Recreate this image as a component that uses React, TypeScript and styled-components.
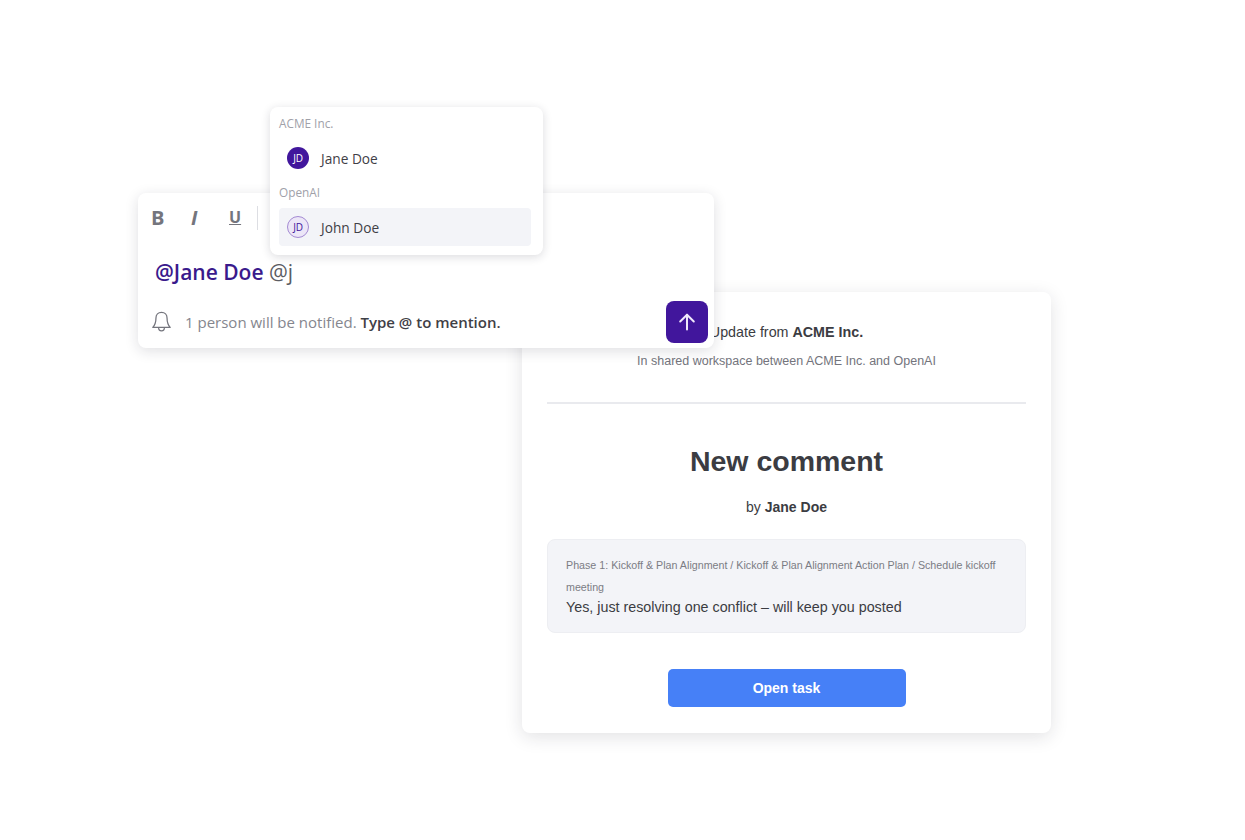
import React from "react";
import styled, { createGlobalStyle } from "styled-components";

const GlobalStyle = createGlobalStyle`
  html, body {
    margin: 0;
    padding: 0;
    background: #fff;
  }
`;

const Canvas = styled.div`
  position: relative;
  width: 1245px;
  height: 840px;
  overflow: hidden;
  background: #fff;
`;

/* email card */
const EmailCard = styled.div`
  position: absolute;
  left: 522px;
  top: 292px;
  width: 529px;
  height: 441px;
  box-sizing: border-box;
  padding: 31px 25px 0 25px;
  border-radius: 8px;
  background: #fff;
  box-shadow: 0 4px 18px rgba(30, 30, 50, 0.13);
  font-family: "Liberation Sans", Arial, sans-serif;
  text-align: center;
  display: flex;
  flex-direction: column;
  align-items: center;
`;

const UpdateLine = styled.div`
  font-size: 14.3px;
  line-height: 18px;
  color: #3b3c42;
  b {
    font-weight: 700;
  }
`;

const Workspace = styled.div`
  margin-top: 12px;
  font-size: 12.5px;
  line-height: 16px;
  color: #73747c;
`;

const Divider = styled.div`
  width: 100%;
  height: 2px;
  margin-top: 33px;
  background: #e9eaee;
`;

const Heading = styled.h1`
  margin: 39px 0 0;
  font-size: 28.5px;
  line-height: 36px;
  font-weight: 700;
  color: #3b3c42;
`;

const ByLine = styled.div`
  margin-top: 19px;
  font-size: 14px;
  line-height: 18px;
  color: #3b3c42;
`;

const Quote = styled.div`
  width: 100%;
  height: 94px;
  box-sizing: border-box;
  margin-top: 23px;
  padding: 15px 18px;
  border: 1px solid #edeef2;
  border-radius: 8px;
  background: #f3f4f8;
  text-align: left;
`;

const QuotePath = styled.div`
  font-size: 10.7px;
  line-height: 21.5px;
  color: #7b7c84;
`;

const QuoteBody = styled.div`
  font-size: 14.3px;
  line-height: 18px;
  color: #3b3c42;
`;

const OpenTask = styled.button`
  width: 238px;
  height: 38px;
  margin-top: 36px;
  border: none;
  border-radius: 5px;
  background: #4680f7;
  color: #fff;
  font-family: inherit;
  font-size: 14px;
  font-weight: 700;
`;

/* editor card */
const EditorCard = styled.div`
  position: absolute;
  left: 138px;
  top: 193px;
  width: 576px;
  height: 155px;
  box-sizing: border-box;
  padding: 12px 13px 0;
  border-radius: 8px;
  background: #fff;
  box-shadow: 0 3px 14px rgba(30, 30, 50, 0.14);
  font-family: "Open Sans", sans-serif;
  display: flex;
  flex-direction: column;
`;

const Toolbar = styled.div`
  display: flex;
  align-items: center;
  height: 25px;
`;

const FormatButton = styled.span<{ $width: number; $size: number; $italic?: boolean; $underline?: boolean }>`
  width: ${(p) => p.$width}px;
  font-size: ${(p) => p.$size}px;
  line-height: 25px;
  font-weight: 700;
  color: #74757d;
  font-style: ${(p) => (p.$italic ? "italic" : "normal")};
  text-decoration: ${(p) => (p.$underline ? "underline" : "none")};
`;

const Separator = styled.div`
  width: 1px;
  height: 24px;
  background: #dddee3;
`;

const Message = styled.div`
  margin: 29px 0 0 4px;
  font-size: 21px;
  line-height: 27px;
  color: #5b5c63;
`;

const Mention = styled.span`
  font-weight: 600;
  color: #3a1a8c;
`;

const Footer = styled.div`
  display: flex;
  align-items: center;
  gap: 13px;
  margin-top: 24px;
  font-size: 15px;
  line-height: 22px;
  color: #85868e;
  b {
    font-weight: 600;
    color: #3f4046;
  }
`;

const SendButton = styled.div`
  position: absolute;
  left: 528px;
  top: 108px;
  width: 42px;
  height: 42px;
  border-radius: 8px;
  background: #41169c;
  display: flex;
  align-items: center;
  justify-content: center;
`;

/* mention dropdown */
const Dropdown = styled.div`
  position: absolute;
  left: 270px;
  top: 107px;
  width: 273px;
  height: 148px;
  box-sizing: border-box;
  padding: 9px 12px 0 9px;
  border-radius: 8px;
  background: #fff;
  box-shadow: 0 2px 10px rgba(30, 30, 50, 0.16);
  font-family: "Open Sans", sans-serif;
`;

const GroupLabel = styled.div`
  height: 15px;
  font-size: 11.8px;
  line-height: 15px;
  color: #a0a1a9;
`;

const Person = styled.div<{ $active?: boolean }>`
  display: flex;
  align-items: center;
  gap: 12px;
  height: 38px;
  margin: ${(p) => (p.$active ? "8px 0 0" : "8px 0 8px")};
  padding-left: 8px;
  border-radius: 4px;
  background: ${(p) => (p.$active ? "#f3f4f8" : "transparent")};
  font-size: 13.7px;
  color: #3f4046;
`;

const Avatar = styled.div<{ $light?: boolean }>`
  width: 22px;
  height: 22px;
  box-sizing: border-box;
  border-radius: 50%;
  display: flex;
  align-items: center;
  justify-content: center;
  font-size: 10px;
  letter-spacing: -0.3px;
  background: ${(p) => (p.$light ? "#ece6f7" : "#41169c")};
  color: ${(p) => (p.$light ? "#41169c" : "#fff")};
  border: ${(p) => (p.$light ? "1px solid #a48ad3" : "none")};
`;

const BellIcon = () => (
  <svg width="21" height="23" viewBox="0 0 20 22" fill="none" stroke="#74757d" strokeWidth="1.2" strokeLinejoin="round">
    <path d="M10 2.200c-3.200 0-5.300 2.400-5.300 5.400 0 5-1 6.800-3 9.100h16.600c-2-2.300-3-4.100-3-9.100 0-3-2.100-5.400-5.300-5.400z" />
    <path d="M7.200 16.800c0 1.900 1.200 3.200 2.800 3.200s2.800-1.300 2.800-3.200" />
  </svg>
);

const ArrowUpIcon = () => (
  <svg width="18" height="18" viewBox="0 0 18 18" fill="none" stroke="#f0e9fb" strokeWidth="2" strokeLinecap="round" strokeLinejoin="round">
    <path d="M9 16.500V1.800" />
    <path d="M2.200 8.500L9 1.800l6.800 6.700" />
  </svg>
);

const App: React.FC = () => {
  return (
    <Canvas>
      <GlobalStyle />
      <EmailCard>
        <UpdateLine>
          Update from <b>ACME Inc.</b>
        </UpdateLine>
        <Workspace>In shared workspace between ACME Inc. and OpenAI</Workspace>
        <Divider />
        <Heading>New comment</Heading>
        <ByLine>
          by <b>Jane Doe</b>
        </ByLine>
        <Quote>
          <QuotePath>
            Phase 1: Kickoff &amp; Plan Alignment / Kickoff &amp; Plan Alignment Action Plan / Schedule kickoff meeting
          </QuotePath>
          <QuoteBody>Yes, just resolving one conflict – will keep you posted</QuoteBody>
        </Quote>
        <OpenTask>Open task</OpenTask>
      </EmailCard>

      <EditorCard>
        <Toolbar>
          <FormatButton $width={40} $size={20}>B</FormatButton>
          <FormatButton $width={38} $size={20} $italic>I</FormatButton>
          <FormatButton $width={28} $size={16} $underline>U</FormatButton>
          <Separator />
        </Toolbar>
        <Message>
          <Mention>@Jane Doe</Mention> @j
        </Message>
        <Footer>
          <BellIcon />
          <span>
            1 person will be notified. <b>Type @ to mention.</b>
          </span>
        </Footer>
        <SendButton>
          <ArrowUpIcon />
        </SendButton>
      </EditorCard>

      <Dropdown>
        <GroupLabel>ACME Inc.</GroupLabel>
        <Person>
          <Avatar>JD</Avatar>
          Jane Doe
        </Person>
        <GroupLabel>OpenAI</GroupLabel>
        <Person $active>
          <Avatar $light>JD</Avatar>
          John Doe
        </Person>
      </Dropdown>
    </Canvas>
  );
};

export default App;
